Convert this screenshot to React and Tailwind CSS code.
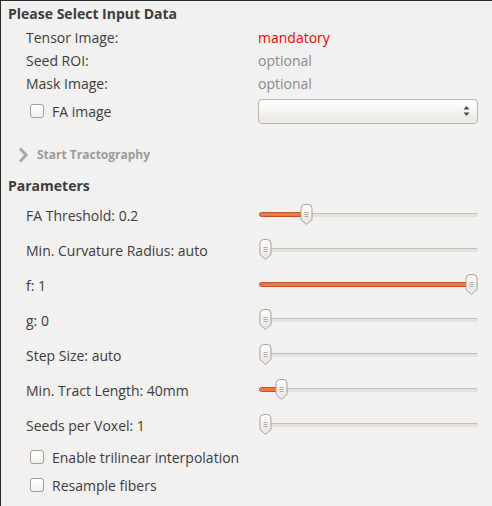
import React from 'react';

const labelCls = 'text-[14px] text-[#3c3c3c]';

const Handle = () => (
    <svg width="13" height="21" viewBox="0 0 13 21" className="block">
        <defs>
            <linearGradient id="hg" x1="0" y1="0" x2="0" y2="1">
                <stop offset="0" stopColor="#ffffff" />
                <stop offset="1" stopColor="#e6e3df" />
            </linearGradient>
        </defs>
        <path d="M1 4.5 Q1 0.5 5 0.5 L8 0.5 Q12 0.5 12 4.5 L12 15.5 L6.5 20.5 L1 15.5 Z" fill="url(#hg)" stroke="#a8a199" strokeWidth="1" />
        <line x1="4.5" y1="8.5" x2="8.5" y2="8.5" stroke="#b3ada6" />
        <line x1="4.5" y1="10.5" x2="8.5" y2="10.5" stroke="#b3ada6" />
        <line x1="4.5" y1="12.5" x2="8.5" y2="12.5" stroke="#b3ada6" />
    </svg>
);

const Slider = ({ value }) => {
    // handle centre travels from 6px to 212px inside the 219px track
    const centre = 6 + value * 206;
    return (
        <div className="relative w-[219px] h-[22px]">
            <div className="absolute left-0 right-0 top-[8px] h-[4px] rounded-full bg-[#e4e1dd] border-t border-[#c4bdb5]" />
            {value > 0 && (
                <div className="absolute left-0 top-[7px] h-[5px] rounded-full bg-[#f07746] border border-[#c9511f]"
                    style={{ width: centre + 'px' }} />
            )}
            <div className="absolute top-[-1px]" style={{ left: (centre - 6.5) + 'px' }}>
                <Handle />
            </div>
        </div>
    );
};

const Checkbox = () => (
    <span className="inline-block w-[14px] h-[14px] rounded-[3px] border border-[#a39c93] bg-gradient-to-b from-white to-[#f3f1ee]" />
);

const params = [
    { label: 'FA Threshold: 0.2', value: 0.2 },
    { label: 'Min. Curvature Radius: auto', value: 0 },
    { label: 'f: 1', value: 1 },
    { label: 'g: 0', value: 0 },
    { label: 'Step Size: auto', value: 0 },
    { label: 'Min. Tract Length: 40mm', value: 0.08 },
    { label: 'Seeds per Voxel: 1', value: 0 },
];

export default function App() {
    return (
        <div className="w-[492px] h-[506px] bg-[#f2f1f0] border-l border-t border-[#2b2b2b] overflow-hidden"
            style={{ fontFamily: '"Open Sans", "DejaVu Sans", sans-serif' }}>
            {/* Input data */}
            <div className="h-[25px] flex items-center pl-[7px] text-[14px] font-bold text-[#3c3c3c]">Please Select Input Data</div>
            <div className="h-[23px] flex items-center">
                <span className={`${labelCls} w-[257px] pl-[25px]`}>Tensor Image:</span>
                <span className="text-[14px] text-[#ff0000]">mandatory</span>
            </div>
            <div className="h-[22px] flex items-center">
                <span className={`${labelCls} w-[257px] pl-[25px]`}>Seed ROI:</span>
                <span className="text-[14px] text-[#8a8a8a]">optional</span>
            </div>
            <div className="h-[24px] flex items-center">
                <span className={`${labelCls} w-[257px] pl-[25px]`}>Mask Image:</span>
                <span className="text-[14px] text-[#8a8a8a]">optional</span>
            </div>
            <div className="h-[32px] flex items-center">
                <div className="w-[257px] pl-[29px] flex items-center gap-[8px]">
                    <Checkbox />
                    <span className={labelCls}>FA image</span>
                </div>
                <div className="w-[220px] h-[25px] rounded-[4px] border border-[#b9b3ab] bg-gradient-to-b from-white to-[#ebe8e5] flex items-center justify-end pr-[7px]">
                    <svg width="7" height="12" viewBox="0 0 7 12">
                        <path d="M0.5 4.5 L3.5 1 L6.5 4.5 Z" fill="#4a4a4a" />
                        <path d="M0.5 7.5 L3.5 11 L6.5 7.5 Z" fill="#4a4a4a" />
                    </svg>
                </div>
            </div>

            {/* Collapsed section */}
            <div className="h-[45px] flex items-center pt-[11px] pl-[17px] gap-[8px]">
                <svg width="11" height="16" viewBox="0 0 11 16">
                    <path d="M2 1.5 L8 8 L2 14.5" fill="none" stroke="#a9a7a4" strokeWidth="3" />
                </svg>
                <span className="text-[12px] font-bold text-[#9b9a98]">Start Tractography</span>
            </div>

            {/* Parameters */}
            <div className="h-[26px] flex items-center pl-[7px] text-[14px] font-bold text-[#3c3c3c]">Parameters</div>
            {params.map(p => (
                <div key={p.label} className="h-[35px] flex items-center">
                    <span className={`${labelCls} w-[258px] pl-[25px]`}>{p.label}</span>
                    <Slider value={p.value} />
                </div>
            ))}
            <div className="h-[28px] flex items-center pl-[29px] gap-[8px]">
                <Checkbox />
                <span className={labelCls}>Enable trilinear interpolation</span>
            </div>
            <div className="h-[28px] flex items-center pl-[29px] gap-[8px]">
                <Checkbox />
                <span className={labelCls}>Resample fibers</span>
            </div>
        </div>
    );
}
